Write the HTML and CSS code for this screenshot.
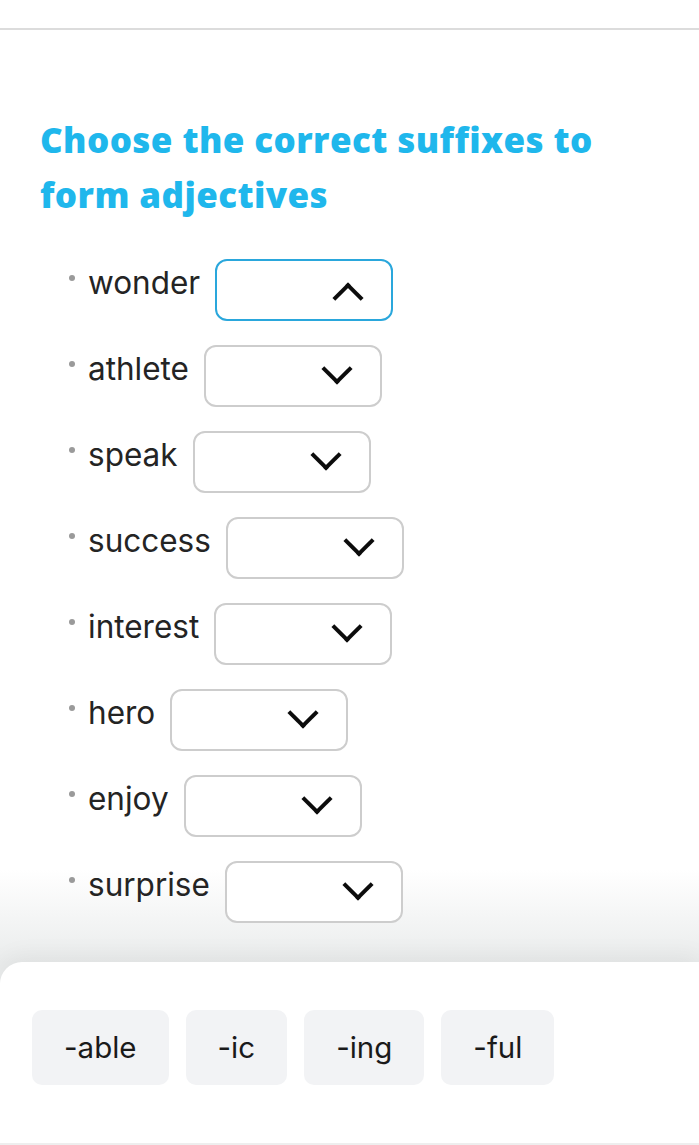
FILE: index.html
```html
<!DOCTYPE html>
<html lang="en">
  <head>
    <meta charset="UTF-8" />
    <title>Suffixes</title>
    <link rel="stylesheet" href="styles.css">
  </head>
  <body>
    <div class="topbar"></div>

    <div class="task">
      <h1>Choose the correct suffixes to<br />form adjectives</h1>

      <ul class="items">
        <li><span class="dot"></span><span class="word">wonder</span><span class="pick open"><i class="chev up"></i></span></li>
        <li><span class="dot"></span><span class="word">athlete</span><span class="pick"><i class="chev"></i></span></li>
        <li><span class="dot"></span><span class="word">speak</span><span class="pick"><i class="chev"></i></span></li>
        <li><span class="dot"></span><span class="word">success</span><span class="pick"><i class="chev"></i></span></li>
        <li><span class="dot"></span><span class="word">interest</span><span class="pick"><i class="chev"></i></span></li>
        <li><span class="dot"></span><span class="word">hero</span><span class="pick"><i class="chev"></i></span></li>
        <li><span class="dot"></span><span class="word">enjoy</span><span class="pick"><i class="chev"></i></span></li>
        <li><span class="dot"></span><span class="word">surprise</span><span class="pick"><i class="chev"></i></span></li>
      </ul>
    </div>

    <div class="chips">
      <span class="chip">-able</span>
      <span class="chip">-ic</span>
      <span class="chip">-ing</span>
      <span class="chip">-ful</span>
    </div>
  </body>
</html>
```

FILE: styles.css
```css
html,
body {
  margin: 0;
  padding: 0;
}

body {
  width: 699px;
  height: 1145px;
  overflow: hidden;
  font-family: "Inter", "Noto Sans", sans-serif;
  color: #222;
  background: linear-gradient(to bottom, #fff 0, #fff 870px, #eaecec 962px, #eaecec 100%);
}

.topbar {
  height: 28px;
  border-bottom: 2px solid #dcdcdc;
  background: #fff;
}

.task {
  padding: 82px 0 0 40px;
}

h1 {
  margin: 0;
  font-family: "Open Sans", sans-serif;
  font-weight: 800;
  font-size: 35px;
  line-height: 55px;
  letter-spacing: 0.4px;
  color: #1fb7ec;
  white-space: nowrap;
}

.items {
  list-style: none;
  margin: 37px 0 0 0;
  padding: 0 0 0 29px;
  display: flex;
  flex-direction: column;
  gap: 24px;
}

.items li {
  display: flex;
  align-items: flex-start;
  height: 62px;
}

.dot {
  width: 6px;
  height: 6px;
  border-radius: 50%;
  background: #9a9a9a;
  margin: 16px 13px 0 0;
}

.word {
  font-size: 31.5px;
  line-height: 48px;
  color: #242424;
}

.pick {
  position: relative;
  box-sizing: border-box;
  width: 178px;
  height: 62px;
  margin-left: 15px;
  border: 2px solid #cdcdcd;
  border-radius: 12px;
  background: #fff;
}

.pick.open {
  border-color: #2aa7dc;
}

.chev {
  position: absolute;
  right: 32px;
  top: 11px;
  width: 22px;
  height: 22px;
  box-sizing: border-box;
  border-right: 4px solid #0c0c0c;
  border-bottom: 4px solid #0c0c0c;
  transform: rotate(45deg);
}

.chev.up {
  top: 26px;
  transform: rotate(-135deg);
}

.chips {
  box-sizing: border-box;
  height: 183px;
  margin-top: 39px;
  padding: 48px 0 0 32px;
  background: #fff;
  border-top-left-radius: 22px;
  border-bottom: 2px solid #eeeeee;
  box-shadow: 0 -6px 24px rgba(0, 0, 0, 0.05);
  display: flex;
  gap: 17px;
  align-items: flex-start;
}

.chip {
  height: 75px;
  line-height: 75px;
  padding: 0 32px;
  background: #f2f3f5;
  border-radius: 10px;
  font-size: 29.5px;
  color: #1a1a1a;
}
```
